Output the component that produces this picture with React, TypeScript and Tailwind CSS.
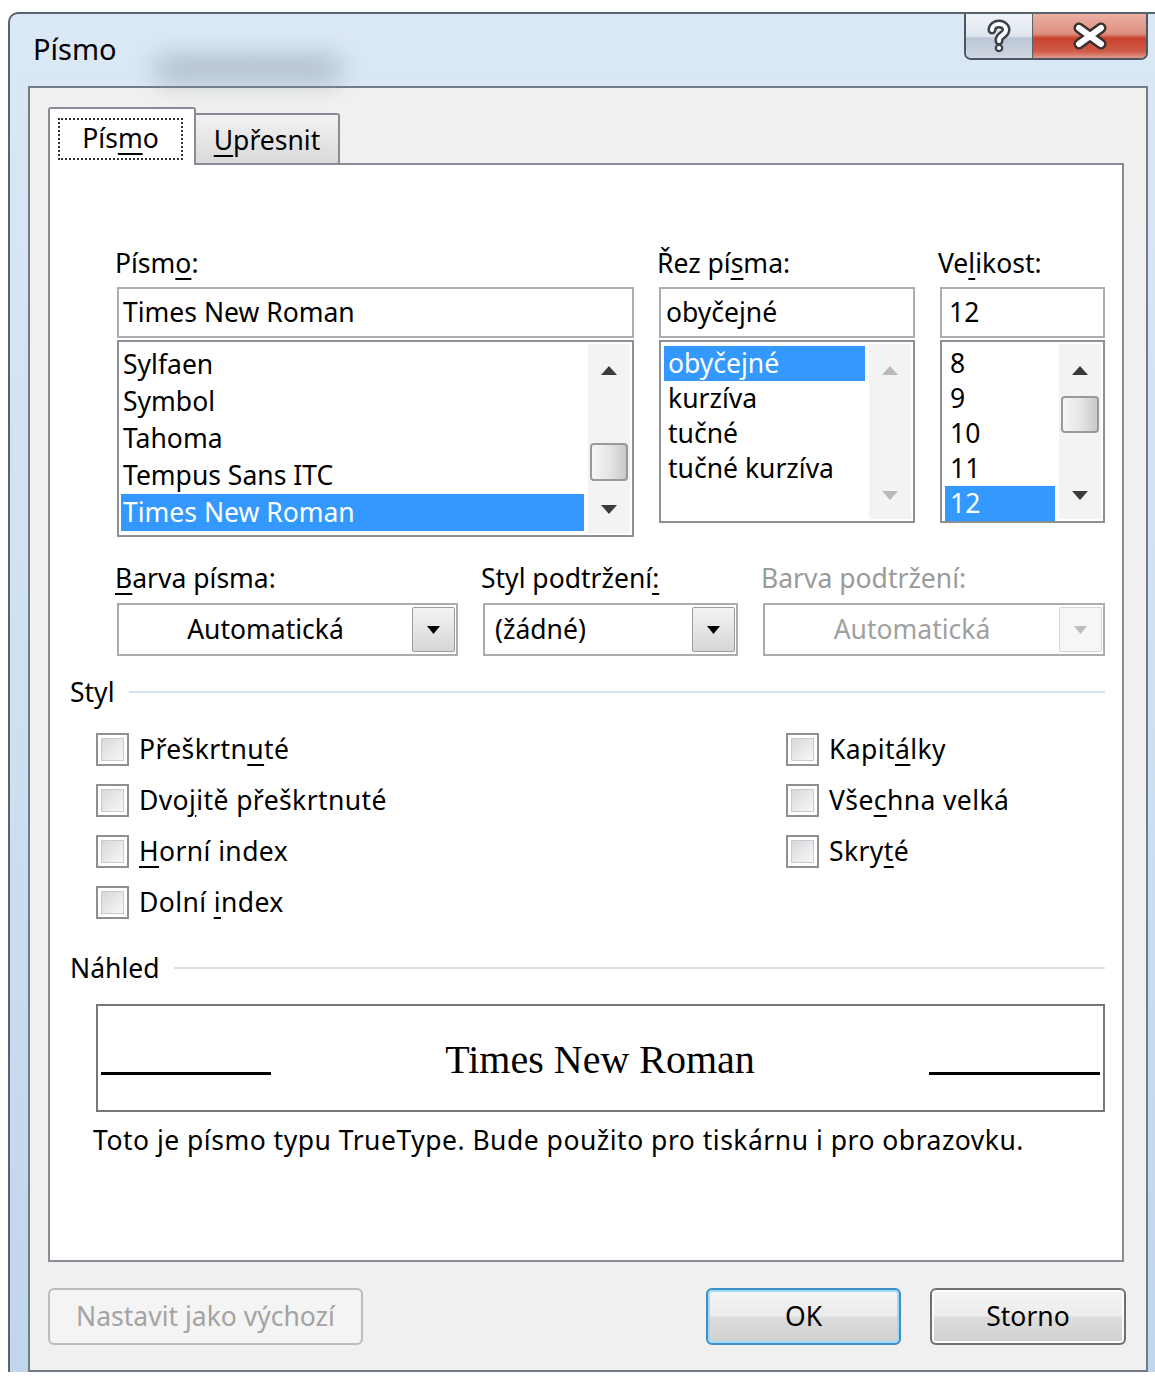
import type { ReactNode } from "react"

const fontNames = ["Sylfaen", "Symbol", "Tahoma", "Tempus Sans ITC", "Times New Roman"]
const fontStyles = ["obyčejné", "kurzíva", "tučné", "tučné kurzíva"]
const fontSizes = ["8", "9", "10", "11", "12"]

// accelerator letter
const Key = ({ children }: { children: ReactNode }) => (
  <u className="underline decoration-2 underline-offset-[5px]">{children}</u>
)

const Arrow = ({ up, dim }: { up?: boolean; dim?: boolean }) => (
  <svg width="16" height="9" viewBox="0 0 16 9" className={dim ? "fill-[#b9b9b9]" : "fill-[#3a3a3a]"}>
    {up ? <path d="M8 0 L16 9 L0 9 Z" /> : <path d="M0 0 L16 0 L8 9 Z" />}
  </svg>
)

const ScrollBar = ({ thumb, dim }: { thumb?: string; dim?: boolean }) => (
  <div className="ml-[4px] flex w-[42px] flex-col bg-[#f3f3f3]">
    <div className="flex h-[52px] items-center justify-center">
      <Arrow up dim={dim} />
    </div>
    <div className="flex-1 px-[2px]">
      {thumb && (
        <div
          className={`${thumb} rounded-[4px] border-2 border-[#9a9a9a] bg-gradient-to-r from-[#f6f6f6] via-[#e6e6e6] to-[#c9c9c9]`}
        />
      )}
    </div>
    <div className="flex h-[48px] items-center justify-center">
      <Arrow dim={dim} />
    </div>
  </div>
)

const Combo = ({ text, align, disabled }: { text: string; align: "center" | "left"; disabled?: boolean }) => (
  <div className="mt-[9px] flex h-[53px] items-center border-2 border-[#a9acb1] bg-white">
    <span
      className={`flex-1 ${align === "center" ? "text-center" : "pl-[10px]"} ${disabled ? "text-[#a0a0a0]" : ""}`}
    >
      {text}
    </span>
    <div
      className={`mr-[1px] flex h-[45px] w-[43px] items-center justify-center rounded-[2px] border ${
        disabled
          ? "border-[#d6d6d6] bg-[#f6f6f6]"
          : "border-[#9c9c9c] bg-gradient-to-b from-[#f4f4f4] to-[#d6d6d6]"
      }`}
    >
      <svg width="13" height="8" viewBox="0 0 13 8" className={disabled ? "fill-[#bdbdbd]" : "fill-black"}>
        <path d="M0 0 L13 0 L6.5 8 Z" />
      </svg>
    </div>
  </div>
)

const CheckBox = ({ children }: { children: ReactNode }) => (
  <div className="flex h-[51px] items-center">
    <div className="h-[33px] w-[33px] border-2 border-[#8f8f8f] bg-white p-[3px]">
      <div className="h-full w-full border border-[#c8ccd2] bg-gradient-to-br from-[#d6d8db] to-[#f8f8f8]" />
    </div>
    <span className="ml-[10px] tracking-[0.4px]">{children}</span>
  </div>
)

const GroupTitle = ({ title, line }: { title: string; line: string }) => (
  <div className="flex h-[32px] items-center pl-[20px] pr-[17px]">
    <span className="leading-[32px]">{title}</span>
    <div className={`${line} h-[2px] flex-1 bg-[#d8e2ea]`} />
  </div>
)

const winButton =
  "flex h-[57px] items-center justify-center rounded-[6px] border-2 bg-[linear-gradient(to_bottom,#f5f5f5_0%,#ececec_48%,#dddddd_52%,#d0d0d0_100%)]"

export default function App() {
  return (
    <div className="h-[1378px] w-[1155px] overflow-hidden bg-white pl-2 pt-3 font-['Noto_Sans','Liberation_Sans',sans-serif] text-[26.5px] text-black">
      {/* window frame */}
      <div className="w-[1180px] rounded-tl-[10px] border-l-2 border-t-2 border-[#59636e] bg-gradient-to-b from-[#dbe8f5] via-[#cfe0f2] to-[#c0d6ed] pl-[18px]">
        {/* title bar */}
        <div className="relative flex h-[72px] w-[1120px] items-start">
          <div className="absolute left-[125px] top-[40px] h-[30px] w-[190px] rounded-full bg-[#8592a0] opacity-45 blur-md" />
          <span className="relative ml-[5px] mt-[20px] text-[29px] leading-[30px]">Písmo</span>
          <div className="ml-auto flex h-[46px] overflow-hidden rounded-b-[7px] border-2 border-t-0 border-[#4e5661]">
            <div className="flex w-[67px] items-center justify-center border-r border-[#59636e] bg-[linear-gradient(to_bottom,#eef2f7_0%,#dfe6ee_50%,#bcc7d4_55%,#cdd6e1_100%)]">
              <svg width="24" height="34" viewBox="0 0 24 34">
                <path
                  d="M5 11 C5 3 19 3 19 11 C19 16 12 16 12 21 L12 22"
                  fill="none"
                  stroke="#3b4148"
                  strokeWidth="9"
                  strokeLinecap="round"
                />
                <path
                  d="M5 11 C5 3 19 3 19 11 C19 16 12 16 12 21 L12 22"
                  fill="none"
                  stroke="#fff"
                  strokeWidth="4"
                  strokeLinecap="round"
                />
                <circle cx="12" cy="29" r="4.3" fill="#3b4148" />
                <circle cx="12" cy="29" r="2.1" fill="#fff" />
              </svg>
            </div>
            <div className="flex w-[113px] items-center justify-center bg-[linear-gradient(to_bottom,#eab0a4_0%,#de8f7f_45%,#c8432f_55%,#cf5c48_85%,#e09a8c_100%)]">
              <svg width="36" height="28" viewBox="0 0 36 28">
                <path d="M7 6 L29 22 M29 6 L7 22" stroke="#3a3030" strokeWidth="11" strokeLinecap="round" />
                <path d="M7 6 L29 22 M29 6 L7 22" stroke="#fff" strokeWidth="6" strokeLinecap="round" />
              </svg>
            </div>
          </div>
        </div>

        {/* client area */}
        <div className="h-[1286px] w-[1120px] border-2 border-[#727c87] bg-[#f0f0f0] pl-[18px] pr-[22px] pt-[19px]">
          {/* tabs */}
          <div className="flex h-[56px] items-end">
            <div className="relative z-10 -mb-[2px] h-[58px] w-[148px] rounded-t-[3px] border-2 border-b-0 border-[#898c95] bg-white pl-[8px] pt-[9px]">
              <div className="flex h-[42px] w-[125px] items-center justify-center border-2 border-dotted border-[#333]">
                Pís<Key>m</Key>o
              </div>
            </div>
            <div className="flex h-[50px] w-[144px] items-center justify-center rounded-tr-[3px] border-r-2 border-t-2 border-[#898c95] bg-gradient-to-b from-[#f3f3f3] to-[#d9d9d9] pt-[4px]">
              <span>
                <Key>U</Key>přesnit
              </span>
            </div>
          </div>

          {/* tab page */}
          <div className="h-[1099px] border-2 border-[#898c95] bg-white">
            {/* font / style / size */}
            <div className="grid grid-cols-[517px_256px_165px] gap-x-[25px] pl-[67px] pt-[82px]">
              <div>
                <div className="-ml-[2px] h-[32px] leading-[32px]">
                  Písm<Key>o</Key>:
                </div>
                <div className="mt-[8px] flex h-[51px] items-center border-2 border-[#abadb3] bg-white pl-[4px]">
                  Times New Roman
                </div>
                <div className="mt-[2px] flex h-[197px] border-2 border-[#8b9097] bg-white p-[2px]">
                  <div className="flex-1 pt-[2px]">
                    {fontNames.map((n, i) => (
                      <div
                        key={n}
                        className={`h-[37px] pl-[2px] leading-[37px] ${i === 4 ? "bg-[#3399ff] text-white" : ""}`}
                      >
                        {n}
                      </div>
                    ))}
                  </div>
                  <ScrollBar thumb="mt-[47px] h-[38px]" />
                </div>
              </div>

              <div>
                <div className="-ml-[2px] h-[32px] leading-[32px]">
                  Řez pí<Key>s</Key>ma:
                </div>
                <div className="mt-[8px] flex h-[51px] items-center border-2 border-[#abadb3] bg-white pl-[5px]">
                  obyčejné
                </div>
                <div className="mt-[2px] flex h-[183px] border-2 border-[#8b9097] bg-white p-[2px]">
                  <div className="flex-1 pl-[1px] pt-[2px]">
                    {fontStyles.map((s, i) => (
                      <div
                        key={s}
                        className={`h-[35px] pl-[4px] leading-[35px] ${i === 0 ? "bg-[#3399ff] text-white" : ""}`}
                      >
                        {s}
                      </div>
                    ))}
                  </div>
                  <ScrollBar dim />
                </div>
              </div>

              <div>
                <div className="-ml-[2px] h-[32px] leading-[32px]">
                  Ve<Key>l</Key>ikost:
                </div>
                <div className="mt-[8px] flex h-[51px] items-center border-2 border-[#abadb3] bg-white pl-[7px]">
                  12
                </div>
                <div className="mt-[2px] flex h-[183px] border-2 border-[#8b9097] bg-white p-[2px]">
                  <div className="flex-1 pl-[1px] pt-[2px]">
                    {fontSizes.map((s, i) => (
                      <div
                        key={s}
                        className={`h-[35px] pl-[5px] leading-[35px] ${i === 4 ? "bg-[#3399ff] text-white" : ""}`}
                      >
                        {s}
                      </div>
                    ))}
                  </div>
                  <ScrollBar thumb="mt-0 h-[37px]" />
                </div>
              </div>
            </div>

            {/* colour / underline */}
            <div className="mt-[25px] grid grid-cols-[341px_255px_342px] gap-x-[25px] pl-[67px]">
              <div>
                <div className="-ml-[2px] h-[32px] leading-[32px]">
                  <Key>B</Key>arva písma:
                </div>
                <Combo text="Automatická" align="center" />
              </div>
              <div>
                <div className="-ml-[2px] h-[32px] leading-[32px]">
                  Styl podtržení<Key>:</Key>
                </div>
                <Combo text="(žádné)" align="left" />
              </div>
              <div>
                <div className="-ml-[2px] h-[32px] leading-[32px] text-[#9a9a9a]">Barva podtržení:</div>
                <Combo text="Automatická" align="center" disabled />
              </div>
            </div>

            {/* effects */}
            <div className="mt-[20px]">
              <GroupTitle title="Styl" line="ml-[15px]" />
            </div>
            <div className="mt-[16px] grid grid-cols-[690px_1fr] pl-[46px]">
              <div>
                <CheckBox>
                  Přeškrtn<Key>u</Key>té
                </CheckBox>
                <CheckBox>
                  Dvo<Key>j</Key>itě přeškrtnuté
                </CheckBox>
                <CheckBox>
                  <Key>H</Key>orní index
                </CheckBox>
                <CheckBox>
                  Dolní <Key>i</Key>ndex
                </CheckBox>
              </div>
              <div>
                <CheckBox>
                  Kapit<Key>á</Key>lky
                </CheckBox>
                <CheckBox>
                  Vše<Key>c</Key>hna velká
                </CheckBox>
                <CheckBox>
                  Skry<Key>t</Key>é
                </CheckBox>
              </div>
            </div>

            {/* preview */}
            <div className="mt-[24px]">
              <GroupTitle title="Náhled" line="ml-[15px]" />
            </div>
            <div className="ml-[46px] mt-[20px] flex h-[108px] w-[1009px] items-end border-2 border-[#767676] bg-white px-[3px]">
              <div className="mb-[35px] h-[3px] w-[170px] bg-black" />
              <div className="mb-[30px] flex-1 text-center font-['Liberation_Serif','Times_New_Roman',serif] text-[40px] leading-[40px]">
                Times New Roman
              </div>
              <div className="mb-[35px] h-[3px] w-[171px] bg-black" />
            </div>
            <div className="mt-[12px] h-[32px] pl-[43px] leading-[32px] tracking-[0.5px]">
              Toto je písmo typu TrueType. Bude použito pro tiskárnu i pro obrazovku.
            </div>
          </div>

          {/* dialog buttons */}
          <div className="-mr-[2px] mt-[26px] flex">
            <div className="flex h-[57px] w-[315px] items-center justify-center rounded-[6px] border-2 border-[#b9bdc1] bg-[#f4f4f4] text-[#a3a3a3]">
              Nastavit jako výchozí
            </div>
            <div className={`${winButton} ml-auto w-[195px] border-[#3c8fc8] shadow-[inset_0_0_0_2px_#9ddcf7]`}>OK</div>
            <div className={`${winButton} ml-[29px] w-[196px] border-[#707070] shadow-[inset_0_0_0_2px_#fbfbfb]`}>
              Storno
            </div>
          </div>
        </div>
      </div>
    </div>
  )
}
